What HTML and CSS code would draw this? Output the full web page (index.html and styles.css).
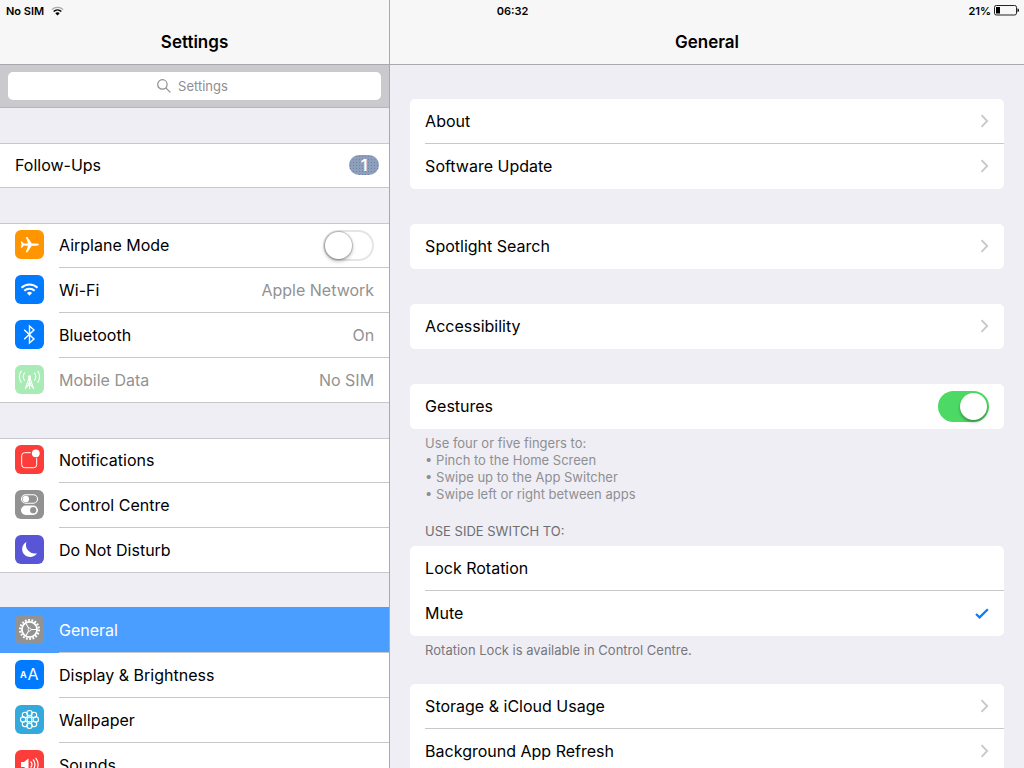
FILE: index.html
```html
<!DOCTYPE html>
<html lang="en-GB">
<head>
  <meta charset="UTF-8" />
  <meta name="viewport" content="width=device-width, initial-scale=1.0"/>
  <title>Settings</title>
  <link rel="stylesheet" href="styles.css">
</head>
<body>

  <svg class="defs" aria-hidden="true">
    <symbol id="chevron" viewBox="0 0 9 14">
      <path d="M1.5 1.2 L7.2 7 L1.5 12.8" fill="none" stroke="#c7c7cc" stroke-width="1.8"/>
    </symbol>
  </svg>

  <div class="status-bar">
    <div class="status-left">
      <span>No SIM</span>
      <svg width="13" height="10" viewBox="0 0 13 10" fill="none">
        <path d="M0.8 3.6 A8.2 8.2 0 0 1 12.2 3.6" stroke="#aaa" stroke-width="1.3"/>
        <path d="M2.7 5.5 A5.5 5.5 0 0 1 10.3 5.5" stroke="#000" stroke-width="1.6"/>
        <path d="M6.5 9.6 L4.3 7.2 A3.2 3.2 0 0 1 8.7 7.2 Z" fill="#000"/>
      </svg>
    </div>
    <time>06:32</time>
    <div class="status-right">
      <span>21%</span>
      <svg width="25" height="11" viewBox="0 0 25 11">
        <rect x="0.5" y="0.5" width="22" height="9.5" rx="1.8" fill="none" stroke="#222"/>
        <rect x="2" y="2" width="4" height="6.5" fill="#000"/>
        <path d="M23.5 3.3 Q25 3.8 25 5.3 Q25 6.8 23.5 7.3 Z" fill="#000"/>
      </svg>
    </div>
  </div>

  <div class="split">
    <aside class="sidebar">
      <header class="nav-bar"><h1>Settings</h1></header>

      <div class="search-bar">
        <label class="search">
          <svg width="14" height="14" viewBox="0 0 14 14" fill="none" stroke="#8e8e93" stroke-width="1.2">
            <circle cx="5.4" cy="5.4" r="4.7"/>
            <path d="M8.8 8.8 L13.3 13.3"/>
          </svg>
          <input type="search" class="search-input" placeholder="Settings" aria-label="Search settings" />
        </label>
      </div>

      <nav class="groups">
        <div class="group">
          <a href="#follow-ups" class="row plain">
            <span class="body">Follow-Ups <span class="badge">1</span></span>
          </a>
        </div>

        <div class="group">
          <label class="row">
            <svg class="icon orange" viewBox="0 0 29 29">
              <path fill="#fff" d="M24 14.6 C24 15.4 22.4 15.8 21 15.8 L16.8 15.8 L12.4 22.2 L10.8 22.2 L13 15.8 L8.8 15.6 L7 17.8 L5.8 17.8 L6.6 14.6 L5.8 11.4 L7 11.4 L8.8 13.6 L13 13.4 L10.8 7 L12.4 7 L16.8 13.4 L21 13.4 C22.4 13.4 24 13.8 24 14.6 Z"/>
            </svg>
            <span class="body">Airplane Mode <input type="checkbox" class="switch" /></span>
          </label>
          <a href="#wifi" class="row">
            <svg class="icon blue" viewBox="0 0 29 29" fill="none" stroke="#fff" stroke-width="2">
              <path d="M6.5 12.7 A11.4 11.4 0 0 1 22.5 12.7"/>
              <path d="M9.3 15.8 A7.4 7.4 0 0 1 19.7 15.8"/>
              <path d="M14.5 20.7 L11.9 18 A3.8 3.8 0 0 1 17.1 18 Z" fill="#fff" stroke="none"/>
            </svg>
            <span class="body">Wi-Fi <span class="value">Apple Network</span></span>
          </a>
          <a href="#bluetooth" class="row">
            <svg class="icon blue" viewBox="0 0 29 29">
              <path d="M9.2 9.8 L19 18.9 L14.5 22.9 L14.5 6.1 L19 10.1 L9.2 19.2" fill="none" stroke="#fff" stroke-width="1.4"/>
            </svg>
            <span class="body">Bluetooth <span class="value">On</span></span>
          </a>
          <a href="#mobile-data" class="row disabled">
            <svg class="icon green" viewBox="0 0 29 29" fill="none" stroke="#fff" stroke-width="1.1">
              <circle cx="14.5" cy="11.8" r="1.5" fill="#fff" stroke="none"/>
              <path d="M14.5 12 V24 M14.2 12.5 L10.3 24 M14.8 12.5 L18.7 24 M12.6 17.5 L17.8 22 M16.4 17.5 L11.2 22"/>
              <path d="M9.8 7.6 A5.6 5.6 0 0 0 9.8 15.6 M19.2 7.6 A5.6 5.6 0 0 1 19.2 15.6"/>
              <path d="M6.4 5.8 A9.6 9.6 0 0 0 6.4 17.6 M22.6 5.8 A9.6 9.6 0 0 1 22.6 17.6"/>
            </svg>
            <span class="body">Mobile Data <span class="value">No SIM</span></span>
          </a>
        </div>

        <div class="group">
          <a href="#notifications" class="row">
            <svg class="icon red" viewBox="0 0 29 29">
              <rect x="6.7" y="7.7" width="15" height="15" rx="3" fill="none" stroke="#fff" stroke-width="1"/>
              <circle cx="20.8" cy="8.3" r="5" fill="#fc3d39"/>
              <circle cx="20.8" cy="8.3" r="3.9" fill="#fff"/>
            </svg>
            <span class="body">Notifications</span>
          </a>
          <a href="#control-centre" class="row">
            <svg class="icon grey" viewBox="0 0 29 29">
              <rect x="6.5" y="4.8" width="16" height="8.4" rx="4.2" fill="none" stroke="#fff" stroke-width="1.1"/>
              <circle cx="10.8" cy="9" r="3.2" fill="#fff"/>
              <rect x="6" y="15.5" width="17" height="9.4" rx="4.7" fill="#fff"/>
              <circle cx="18.2" cy="20.2" r="3.1" fill="#929292"/>
            </svg>
            <span class="body">Control Centre</span>
          </a>
          <a href="#do-not-disturb" class="row">
            <svg class="icon purple" viewBox="0 0 29 29">
              <path d="M11.4 7 A8 8 0 1 0 22 18.2 A8.8 8.8 0 0 1 11.4 7 Z" fill="#fff"/>
            </svg>
            <span class="body">Do Not Disturb</span>
          </a>
        </div>

        <div class="group">
          <a href="#general" class="row selected" aria-current="page">
            <svg class="icon grey" viewBox="0 0 29 29" fill="none" stroke="#fff">
              <circle cx="14.5" cy="14.5" r="9.4" stroke-width="2.2" stroke-dasharray="1.8 1.481"/>
              <circle cx="14.5" cy="14.5" r="7.6" stroke-width="1.8"/>
              <circle cx="14.5" cy="14.5" r="1.5" stroke-width="1"/>
              <path d="M16.2 14.5 H21.5 M13.6 13 L11 8.4 M13.6 16 L11 20.6" stroke-width="1.1"/>
            </svg>
            <span class="body">General</span>
          </a>
          <a href="#display" class="row">
            <svg class="icon blue" viewBox="0 0 29 29" fill="#fff" font-family="Inter, sans-serif">
              <text x="5" y="18" font-size="9" font-weight="700">A</text>
              <text x="12.5" y="20" font-size="16">A</text>
            </svg>
            <span class="body">Display &amp; Brightness</span>
          </a>
          <a href="#wallpaper" class="row">
            <svg class="icon cyan" viewBox="0 0 29 29" fill="none" stroke="#fff" stroke-width="1.1">
              <circle cx="14.5" cy="14.5" r="2.4"/>
              <circle cx="14.5" cy="8.2" r="2.7"/>
              <circle cx="19" cy="10" r="2.7"/>
              <circle cx="20.8" cy="14.5" r="2.7"/>
              <circle cx="19" cy="19" r="2.7"/>
              <circle cx="14.5" cy="20.8" r="2.7"/>
              <circle cx="10" cy="19" r="2.7"/>
              <circle cx="8.2" cy="14.5" r="2.7"/>
              <circle cx="10" cy="10" r="2.7"/>
            </svg>
            <span class="body">Wallpaper</span>
          </a>
          <a href="#sounds" class="row">
            <svg class="icon red" viewBox="0 0 29 29" fill="none" stroke="#fff" stroke-width="1.2">
              <path d="M6 12 H9 L13.5 8.5 V20.5 L9 17 H6 Z" fill="#fff" stroke="none"/>
              <path d="M15.6 11.5 A4.4 4.4 0 0 1 15.6 17.5 M18 9.5 A7.4 7.4 0 0 1 18 19.5 M20.6 7.8 A10.4 10.4 0 0 1 20.6 21.2"/>
            </svg>
            <span class="body">Sounds</span>
          </a>
        </div>
      </nav>
    </aside>

    <main class="detail">
      <header class="nav-bar"><h2>General</h2></header>

      <div class="cards">
        <div class="card">
          <a href="#about" class="item">About <svg class="chevron"><use href="#chevron"/></svg></a>
          <a href="#software-update" class="item">Software Update <svg class="chevron"><use href="#chevron"/></svg></a>
        </div>

        <div class="card">
          <a href="#spotlight" class="item">Spotlight Search <svg class="chevron"><use href="#chevron"/></svg></a>
        </div>

        <div class="card">
          <a href="#accessibility" class="item">Accessibility <svg class="chevron"><use href="#chevron"/></svg></a>
        </div>

        <section>
          <div class="card">
            <label class="item">Gestures <input type="checkbox" class="switch" checked /></label>
          </div>
          <div class="note">
            <p>Use four or five fingers to:</p>
            <p>• Pinch to the Home Screen</p>
            <p>• Swipe up to the App Switcher</p>
            <p>• Swipe left or right between apps</p>
          </div>
          <h3 id="side-switch">USE SIDE SWITCH TO:</h3>
          <div class="card" role="radiogroup" aria-labelledby="side-switch">
            <label class="item">Lock Rotation <input type="radio" name="side" class="tick" /></label>
            <label class="item">Mute <input type="radio" name="side" class="tick" checked />
              <svg class="check" width="14" height="11" viewBox="0 0 14 11">
                <path d="M1 6 L4.6 9.4 L12.8 1.2" fill="none" stroke="#0a7cf5" stroke-width="2.2"/>
              </svg>
            </label>
          </div>
          <p class="note">Rotation Lock is available in Control Centre.</p>
          <div class="card last">
            <a href="#storage" class="item">Storage &amp; iCloud Usage <svg class="chevron"><use href="#chevron"/></svg></a>
            <a href="#background-refresh" class="item">Background App Refresh <svg class="chevron"><use href="#chevron"/></svg></a>
          </div>
        </section>
      </div>
    </main>
  </div>

</body>
</html>
```
FILE: styles.css
```css
/* Base styles */
* {
  margin: 0;
  padding: 0;
  box-sizing: border-box;
}

body {
  font-family: Inter, 'Liberation Sans', sans-serif;
  font-size: 16px;
  line-height: 20px;
  color: #000;
  background-color: #efeef4;
  height: 100vh;
  overflow: hidden;
}

a {
  color: inherit;
  text-decoration: none;
}

svg {
  flex-shrink: 0;
}

.defs {
  position: absolute;
  width: 0;
  height: 0;
}

/* Status bar, drawn over both panes */
.status-bar {
  position: absolute;
  top: 0;
  left: 0;
  right: 0;
  height: 21px;
  padding: 0 5px 0 6px;
  display: grid;
  grid-template-columns: 1fr auto 1fr;
  align-items: center;
  font-size: 11px;
  font-weight: 600;
}

.status-left, .status-right {
  display: flex;
  align-items: center;
  gap: 7px;
}

.status-right {
  justify-content: flex-end;
  gap: 3px;
}

/* Panes */
.split {
  display: grid;
  grid-template-columns: 38% 1fr;
  height: 100%;
}

.sidebar, .detail {
  overflow-y: auto;
  scrollbar-width: none;
}

.detail {
  border-left: 1px solid #a9a9ad;
}

.nav-bar {
  height: 65px;
  padding-top: 20px;
  display: flex;
  justify-content: center;
  align-items: center;
  background-color: #f7f7f7;
  border-bottom: 1px solid #a9a9ad;
}

h1, h2 {
  font-size: 17px;
  font-weight: 600;
}

/* Search */
.search-bar {
  padding: 7px 8px;
  background-color: #c9c9ce;
  border-bottom: 1px solid #b5b5ba;
}

.search {
  height: 28px;
  display: flex;
  justify-content: center;
  align-items: center;
  gap: 7px;
  background-color: white;
  border-radius: 5px;
}

.search-input {
  field-sizing: content;
  min-width: 54px;
  border: none;
  outline: none;
  background: none;
  font: inherit;
  font-size: 13px;
  appearance: none;
}

.search-input::placeholder {
  color: #8e8e93;
}

/* Sidebar list */
.groups {
  display: flex;
  flex-direction: column;
  gap: 35px;
  padding: 35px 0;
}

.group {
  background-color: white;
  box-shadow: inset 0 1px #c8c7cc;
}

.row {
  height: 45px;
  padding-left: 15px;
  display: flex;
  gap: 15px;
}

.icon {
  width: 29px;
  height: 29px;
  margin-top: 7px;
  border-radius: 6px;
}

.orange { background-color: #ff9500; }
.blue { background-color: #007aff; }
.green { background-color: #a9ebb5; }
.red { background-color: #fc3d39; }
.grey { background-color: #929292; }
.purple { background-color: #5856d6; }
.cyan { background-color: #34aadc; }

.body {
  flex: 1;
  display: flex;
  justify-content: space-between;
  align-items: center;
  padding-right: 15px;
  border-bottom: 1px solid #c8c7cc;
}

.row:last-child {
  border-bottom: 1px solid #c8c7cc;
}

.row:last-child .body {
  border-bottom: none;
}

.plain .body {
  padding-right: 10px;
}

.value, .disabled {
  color: #929292;
}

.selected {
  color: white;
  background-color: #4a9eff;
  box-shadow: 0 -1px #4a9eff;
}

.badge {
  width: 30px;
  height: 20px;
  border-radius: 10px;
  color: white;
  font-weight: 600;
  text-align: center;
  background-color: #8e9fbc;
  background-image: radial-gradient(#7383a6 1px, transparent 1px);
  background-size: 3px 3px;
}

/* Switch */
.switch {
  appearance: none;
  width: 51px;
  height: 31px;
  padding: 2px;
  border-radius: 16px;
  background-color: white;
  box-shadow: inset 0 0 0 2px #e5e5e5;
}

.switch::before {
  content: '';
  display: block;
  width: 27px;
  height: 27px;
  border-radius: 50%;
  background-color: white;
  box-shadow: 0 0 1px 1px rgba(0, 0, 0, 0.2), 0 2px 4px rgba(0, 0, 0, 0.3);
}

.switch:checked {
  background-color: #4cd964;
  box-shadow: none;
}

.switch:checked::before {
  margin-left: 20px;
  box-shadow: 0 2px 3px rgba(0, 0, 0, 0.35);
}

/* Detail cards */
.cards {
  display: flex;
  flex-direction: column;
  gap: 35px;
  padding: 34px 20px;
}

.card {
  padding-left: 15px;
  background-color: white;
  border-radius: 5px;
}

.item {
  height: 45px;
  padding-right: 15px;
  display: flex;
  justify-content: space-between;
  align-items: center;
  border-bottom: 1px solid #c8c7cc;
}

.item:last-child {
  border-bottom-color: transparent;
}

.chevron {
  width: 9px;
  height: 14px;
}

.tick {
  appearance: none;
}

.note, h3 {
  padding: 6px 15px 0;
  font-size: 13px;
  font-weight: 400;
  line-height: 17px;
  color: #8e8e93;
}

h3 {
  padding: 20px 15px 6px;
  color: #6d6d72;
}

/* footnote under a card explains the whole group */
.card + p.note {
  color: #77777c;
}

.last {
  margin-top: 25px;
}
```
